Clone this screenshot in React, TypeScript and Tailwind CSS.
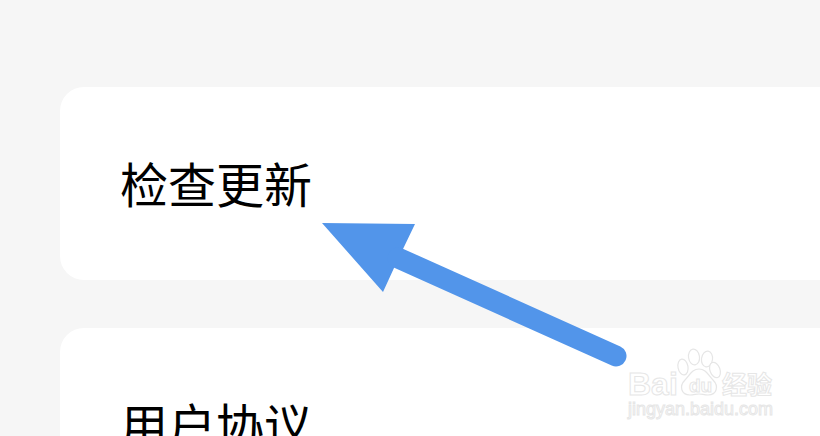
const items = ["检查更新", "用户协议"];

// Baidu jingyan watermark in the lower right corner
function Watermark() {
  const outline = "[-webkit-text-stroke:1px_#e6e6e6] text-white font-['Liberation_Sans',sans-serif]";
  return (
    <div className="absolute left-[628px] top-[348px] w-[150px] h-[72px]">
      <svg className="absolute left-[48px] top-0" width="46" height="50" viewBox="0 0 46 50" fill="#fff" stroke="#e6e6e6" strokeWidth="1.2">
        <ellipse cx="7" cy="19" rx="5" ry="8" transform="rotate(-10 7 19)" />
        <ellipse cx="18" cy="9" rx="5.5" ry="8" transform="rotate(-8 18 9)" />
        <ellipse cx="31" cy="11" rx="5.5" ry="8" transform="rotate(8 31 11)" />
        <ellipse cx="39" cy="22" rx="5" ry="8" transform="rotate(-20 39 22)" />
        <path d="M23 21c7 0 9 6 14 11 6 6 4 15-5 15-4 0-6-1-9-1s-5 1-9 1c-9 0-11-9-5-15 5-5 7-11 14-11z" />
      </svg>
      <span className={`absolute left-0 top-[20px] text-[32px] leading-[32px] font-bold ${outline}`}>Bai</span>
      <span className={`absolute left-[61px] top-[28px] text-[19px] leading-[20px] font-bold ${outline}`}>du</span>
      <span className="absolute left-[94px] top-[21px] text-[25px] leading-[28px] font-bold text-white [-webkit-text-stroke:1px_#e6e6e6] font-['Noto_Sans_CJK_SC',sans-serif]">经验</span>
      <span className={`absolute left-0 top-[51px] text-[18px] leading-[20px] whitespace-nowrap ${outline}`}>jingyan.baidu.com</span>
    </div>
  );
}

export default function App() {
  return (
    <div className="relative h-[436px] w-[820px] overflow-hidden bg-[#f6f6f6] pl-[60px] pt-[87px] flex flex-col gap-[48px] font-['Noto_Sans_CJK_SC',sans-serif]">
      {items.map((item) => (
        <div key={item} className="h-[193px] shrink-0 rounded-l-[24px] bg-white flex items-center pl-[60px] pb-[4px]">
          <span className="text-[48px] leading-[64px] text-black">{item}</span>
        </div>
      ))}

      {/* annotation arrow */}
      <svg className="absolute left-0 top-0" width="820" height="436" viewBox="0 0 820 436" fill="#5295ea">
        <polygon points="322,223 415,224 403,249 394,268 383,292" />
        <line x1="398" y1="258" x2="616" y2="356" stroke="#5295ea" strokeWidth="21" strokeLinecap="round" />
      </svg>

      <Watermark />
    </div>
  );
}
